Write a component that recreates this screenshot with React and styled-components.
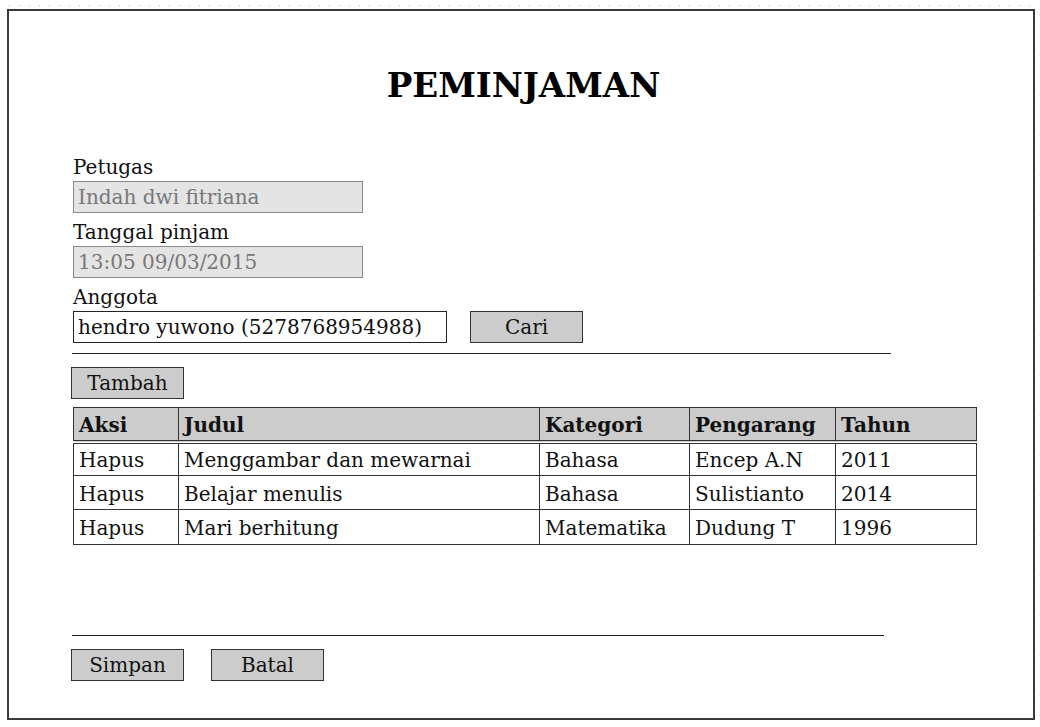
import React from "react";
import styled, { createGlobalStyle } from "styled-components";

const GlobalStyle = createGlobalStyle`
  html, body { margin: 0; padding: 0; background: #ffffff; }
  body { font-family: "DejaVu Serif", "Liberation Serif", serif; color: #111; }
`;

const Frame = styled.div`
  position: relative;
  box-sizing: border-box;
  margin: 9px 0 0 7px;
  width: 1028px;
  height: 711px;
  border: 2px solid #3a3a3a;
  background: #fff;

  &::before {
    content: "";
    position: absolute;
    top: -6px;
    left: 0;
    width: 1024px;
    height: 2px;
    background: repeating-linear-gradient(to right, #dadada 0 1px, transparent 1px 10px);
  }
  &::after {
    content: "";
    position: absolute;
    top: 4px;
    left: 1030px;
    width: 1px;
    height: 704px;
    background: repeating-linear-gradient(to bottom, #e2e2e2 0 1px, transparent 1px 10px);
  }
`;

const Title = styled.h1`
  margin: 54px 0 0 0;
  padding-left: 5px;
  font-size: 34px;
  line-height: 40px;
  font-weight: bold;
  text-align: center;
  color: #000;
`;

const Content = styled.div`
  display: flex;
  flex-direction: column;
  padding-left: 64px;
  margin-top: 52px;
`;

const Fields = styled.div`
  display: flex;
  flex-direction: column;
  gap: 9px;
`;

const Field = styled.div`
  display: flex;
  flex-direction: column;
  gap: 4px;
`;

const Label = styled.label`
  font-size: 20px;
  line-height: 20px;
  color: #111;
`;

const Row = styled.div`
  display: flex;
  align-items: center;
  gap: ${(p) => p.$gap || 0}px;
`;

const Input = styled.div`
  box-sizing: border-box;
  width: ${(p) => p.$w}px;
  height: 32px;
  padding: 0 4px;
  display: flex;
  align-items: center;
  font-size: 20px;
  white-space: nowrap;
  background: ${(p) => (p.$disabled ? "#e4e4e4" : "#fff")};
  color: ${(p) => (p.$disabled ? "#777" : "#111")};
  border: 1px solid ${(p) => (p.$disabled ? "#8a8a8a" : "#222")};
`;

const Button = styled.button`
  box-sizing: border-box;
  width: 113px;
  height: 32px;
  margin-left: ${(p) => p.$ml || 0}px;
  padding: 0;
  font-family: inherit;
  font-size: 20px;
  color: #111;
  background: #cccccc;
  border: 1px solid #333;
  border-radius: 0;
  cursor: pointer;
`;

const Rule = styled.hr`
  margin: ${(p) => p.$mt}px 0 0 -1px;
  width: ${(p) => p.$w}px;
  height: 0;
  border: 0;
  border-top: 1px solid #222;
`;

const Table = styled.table`
  margin-top: 8px;
  width: 903px;
  border-collapse: collapse;
  font-size: 20px;
  table-layout: fixed;
`;

const Th = styled.th`
  box-sizing: border-box;
  height: 34px;
  padding: 2px 5px 0;
  text-align: left;
  font-weight: bold;
  background: #cccccc;
  border: 1px solid #333;
  border-bottom: 4px double #333;
  white-space: nowrap;
`;

const Td = styled.td`
  box-sizing: border-box;
  height: ${(p) => p.$h || 34}px;
  padding: 2px 5px 0;
  border: 1px solid #333;
  white-space: nowrap;
`;

const Footer = styled.div`
  display: flex;
  margin-top: 13px;
  margin-left: -2px;
`;

const TopButton = styled.div`
  margin-top: 13px;
  margin-left: -2px;
`;

const columns = [
  { key: "aksi", label: "Aksi", w: 105 },
  { key: "judul", label: "Judul", w: 361 },
  { key: "kategori", label: "Kategori", w: 150 },
  { key: "pengarang", label: "Pengarang", w: 146 },
  { key: "tahun", label: "Tahun", w: 141 },
];

const rows = [
  { aksi: "Hapus", judul: "Menggambar dan mewarnai", kategori: "Bahasa", pengarang: "Encep A.N", tahun: "2011", h: 34 },
  { aksi: "Hapus", judul: "Belajar menulis", kategori: "Bahasa", pengarang: "Sulistianto", tahun: "2014", h: 34 },
  { aksi: "Hapus", judul: "Mari berhitung", kategori: "Matematika", pengarang: "Dudung T", tahun: "1996", h: 35 },
];

export default function App() {
  return (
    <>
      <GlobalStyle />
      <Frame>
        <Title>PEMINJAMAN</Title>
        <Content>
          <Fields>
            <Field>
              <Label>Petugas</Label>
              <Input $w={290} $disabled>Indah dwi fitriana</Input>
            </Field>
            <Field>
              <Label>Tanggal pinjam</Label>
              <Input $w={290} $disabled>13:05 09/03/2015</Input>
            </Field>
            <Field>
              <Label>Anggota</Label>
              <Row $gap={23}>
                <Input $w={374}>hendro yuwono (5278768954988)</Input>
                <Button>Cari</Button>
              </Row>
            </Field>
          </Fields>
          <Rule $mt={10} $w={819} />
          <TopButton>
            <Button>Tambah</Button>
          </TopButton>
          <Table>
            <colgroup>
              {columns.map((c) => (
                <col key={c.key} style={{ width: c.w }} />
              ))}
            </colgroup>
            <thead>
              <tr>
                {columns.map((c) => (
                  <Th key={c.key}>{c.label}</Th>
                ))}
              </tr>
            </thead>
            <tbody>
              {rows.map((r, i) => (
                <tr key={i}>
                  {columns.map((c) => (
                    <Td key={c.key} $h={r.h}>{r[c.key]}</Td>
                  ))}
                </tr>
              ))}
            </tbody>
          </Table>
          <Rule $mt={90} $w={812} />
          <Footer>
            <Button>Simpan</Button>
            <Button $ml={27}>Batal</Button>
          </Footer>
        </Content>
      </Frame>
    </>
  );
}
